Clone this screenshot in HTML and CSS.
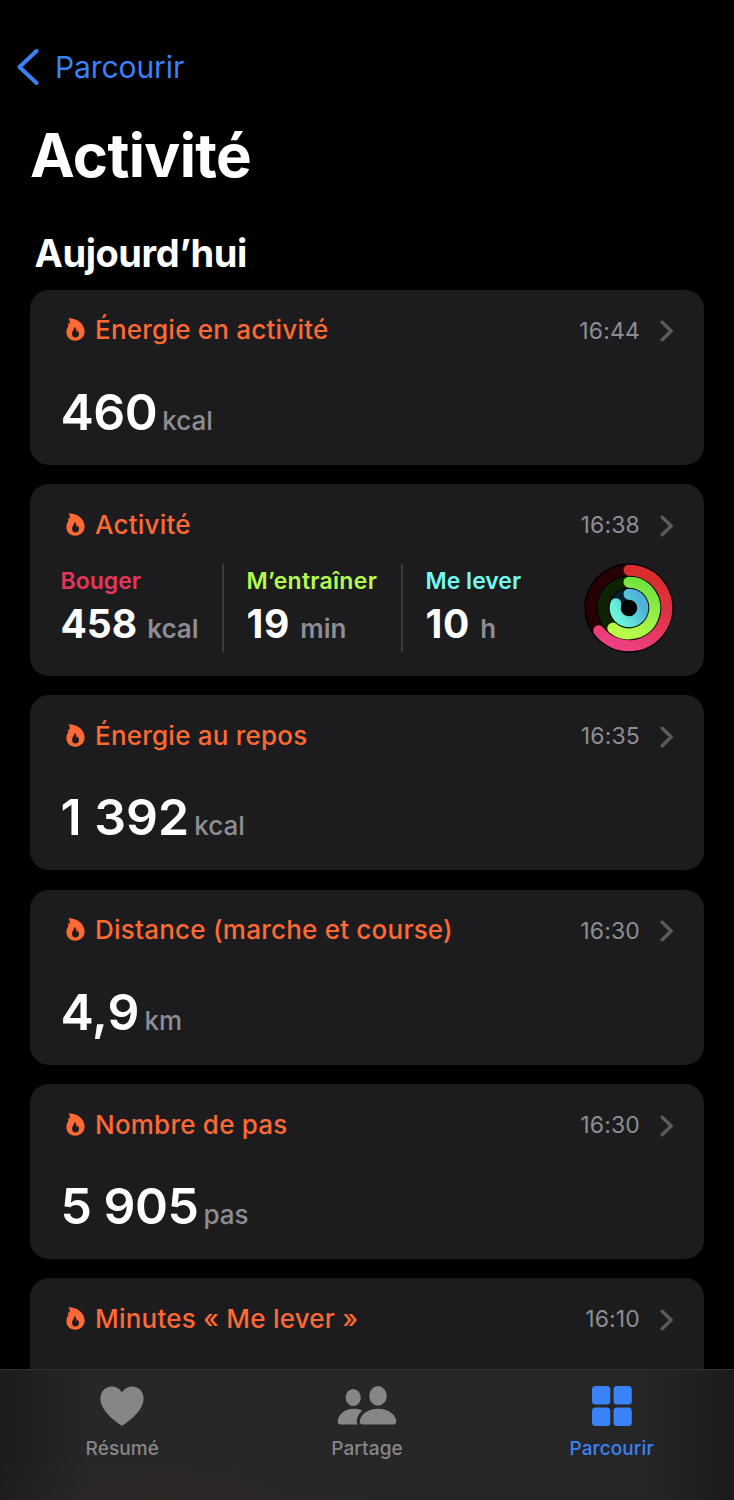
FILE: index.html
```html
<!DOCTYPE html>
<html lang="fr">
<head>
  <meta charset="UTF-8" />
  <meta name="viewport" content="width=device-width, initial-scale=1.0"/>
  <title>Activité</title>
  <link rel="stylesheet" href="styles.css">
</head>
<body>
  <!-- shared icons -->
  <svg class="sprite" width="0" height="0">
    <symbol id="flame" viewBox="0 0 19 23">
      <path fill-rule="evenodd" d="M2.4.3C10.8.2 18.6 5.6 18.6 13.6c0 5.3-4 9.1-9.3 9.1C4 22.7.4 19 .4 14.2c0-2.5.8-4.4 2-6L1.800 5.300l2 .5C4 3.800 3.600 1.900 2.400.3zM8.600 8.600c.3 2.400-2.500 4.400-2.500 7.300 0 2.200 1.500 3.600 3.500 3.600s3.400-1.400 3.400-3.500c0-1.600-.7-2.800-1.600-3.600-.1.800-.4 1.300-.9 1.600.1-1.900-.6-4.100-1.900-5.400z"/>
    </symbol>
    <symbol id="chevron" viewBox="0 0 14 22">
      <path d="M2.2 2.2L11.2 11l-9 8.8" fill="none" stroke="currentColor" stroke-width="3.4" stroke-linecap="round" stroke-linejoin="round"/>
    </symbol>
  </svg>

  <header class="nav">
    <a class="back" href="#">
      <svg class="back-icon" viewBox="0 0 22 36"><path d="M19.5 2L2.5 18l17 16" fill="none" stroke="currentColor" stroke-width="4" stroke-linecap="round" stroke-linejoin="round"/></svg>
      <span>Parcourir</span>
    </a>
    <h1>Activité</h1>
  </header>

  <main class="content">
    <h2>Aujourd’hui</h2>

    <div class="cards">
      <section class="card">
        <div class="card-header">
          <svg class="flame"><use href="#flame"/></svg>
          <h3>Énergie en activité</h3>
          <span class="time">16:44</span>
          <svg class="chevron"><use href="#chevron"/></svg>
        </div>
        <p class="value">460<span class="unit">kcal</span></p>
      </section>

      <section class="card card-rings">
        <div class="card-header">
          <svg class="flame"><use href="#flame"/></svg>
          <h3>Activité</h3>
          <span class="time">16:38</span>
          <svg class="chevron"><use href="#chevron"/></svg>
        </div>
        <div class="stats">
          <div class="stat move">
            <span class="label">Bouger</span>
            <p class="stat-value">458<span class="unit">kcal</span></p>
          </div>
          <div class="stat exercise">
            <span class="label">M’entraîner</span>
            <p class="stat-value">19<span class="unit">min</span></p>
          </div>
          <div class="stat stand">
            <span class="label">Me lever</span>
            <p class="stat-value">10<span class="unit">h</span></p>
          </div>
          <svg class="rings" viewBox="-45 -45 90 90">
            <defs>
              <linearGradient id="red" x1="0.6" y1="0" x2="0.3" y2="1">
                <stop offset="0" stop-color="#d92c2b"/>
                <stop offset="0.55" stop-color="#e23550"/>
                <stop offset="1" stop-color="#ee4084"/>
              </linearGradient>
              <linearGradient id="green" x1="0.6" y1="0" x2="0.3" y2="1">
                <stop offset="0" stop-color="#72e33f"/>
                <stop offset="1" stop-color="#b8fc4b"/>
              </linearGradient>
              <linearGradient id="blue" x1="0.8" y1="0.1" x2="0" y2="0.6">
                <stop offset="0" stop-color="#4fb2d9"/>
                <stop offset="1" stop-color="#69f3d8"/>
              </linearGradient>
            </defs>
            <circle r="44.7" fill="#000"/>
            <g fill="none" stroke-width="11" stroke-linecap="round">
              <circle r="37.8" stroke="#260003"/>
              <circle r="25.8" stroke="#0d2302"/>
              <circle r="13.8" stroke="#03202e"/>
              <path d="M0-37.8A37.8 37.8 0 1 1-30.2 22.7" stroke="url(#red)"/>
              <path d="M0-25.8A25.8 25.8 0 1 1-16.2 20.1" stroke="url(#green)"/>
              <path d="M0-13.8A13.8 13.8 0 1 1-13.1-4.3" stroke="url(#blue)"/>
            </g>
          </svg>
        </div>
      </section>

      <section class="card">
        <div class="card-header">
          <svg class="flame"><use href="#flame"/></svg>
          <h3>Énergie au repos</h3>
          <span class="time">16:35</span>
          <svg class="chevron"><use href="#chevron"/></svg>
        </div>
        <p class="value spaced">1 392<span class="unit">kcal</span></p>
      </section>

      <section class="card">
        <div class="card-header">
          <svg class="flame"><use href="#flame"/></svg>
          <h3>Distance (marche et course)</h3>
          <span class="time">16:30</span>
          <svg class="chevron"><use href="#chevron"/></svg>
        </div>
        <p class="value spaced">4,9<span class="unit">km</span></p>
      </section>

      <section class="card">
        <div class="card-header">
          <svg class="flame"><use href="#flame"/></svg>
          <h3>Nombre de pas</h3>
          <span class="time">16:30</span>
          <svg class="chevron"><use href="#chevron"/></svg>
        </div>
        <p class="value">5 905<span class="unit">pas</span></p>
      </section>

      <section class="card">
        <div class="card-header">
          <svg class="flame"><use href="#flame"/></svg>
          <h3>Minutes « Me lever »</h3>
          <span class="time">16:10</span>
          <svg class="chevron"><use href="#chevron"/></svg>
        </div>
      </section>
    </div>
  </main>

  <nav class="tabbar">
    <a class="tab" href="#">
      <svg class="tab-icon" viewBox="0 0 44 40"><path d="M22 39.8C18 37.6.4 25.6.4 12.6.4 5.5 5.2.4 11.6.4c4.7 0 8.4 2.5 10.4 6.1C24 2.9 27.7.4 32.4.4c6.4 0 11.2 5.1 11.2 12.2C43.6 25.6 26 37.6 22 39.8z" fill="currentColor"/></svg>
      <span>Résumé</span>
    </a>
    <a class="tab" href="#">
      <svg class="tab-icon people" viewBox="0 0 60 40">
        <g fill="currentColor">
          <ellipse cx="16.2" cy="11.5" rx="7.6" ry="8.6"/>
          <ellipse cx="41" cy="9.9" rx="8.8" ry="9.8"/>
          <path d="M25.2 24.4C22.6 23.3 19.8 22.8 16.6 22.8 6.6 22.8.8 29.8.8 35.8c0 1.8.9 2.7 2.6 2.7h17.2c-2.2-4.6.6-10.3 4.6-14.1z"/>
          <path d="M41 22.8c-12 0-18.3 7.7-18.3 12.8 0 2 1 2.9 2.8 2.9h31c1.8 0 2.8-.9 2.8-2.9 0-5.1-6.3-12.8-18.3-12.8z"/>
        </g>
      </svg>
      <span>Partage</span>
    </a>
    <a class="tab active" href="#">
      <svg class="tab-icon" viewBox="0 0 44 40">
        <g fill="currentColor">
          <rect x="2" y="0" width="18.3" height="18.4" rx="3.5"/>
          <rect x="23.5" y="0" width="18.3" height="18.4" rx="3.5"/>
          <rect x="2" y="21.5" width="18.3" height="18.4" rx="3.5"/>
          <rect x="23.5" y="21.5" width="18.3" height="18.4" rx="3.5"/>
        </g>
      </svg>
      <span>Parcourir</span>
    </a>
  </nav>
</body>
</html>
```

FILE: styles.css
```css
* {
  box-sizing: border-box;
}

body {
  margin: 0;
  height: 1500px;
  overflow: hidden;
  background: #000;
  color: #fff;
  font-family: Inter, "Noto Sans", sans-serif;
  display: flex;
  flex-direction: column;
}

h1, h2, h3, p {
  margin: 0;
}

a {
  color: inherit;
  text-decoration: none;
}

svg {
  display: block;
  flex-shrink: 0;
}

.sprite {
  position: absolute;
}

/* Top navigation */
.nav {
  padding-top: 47px;
}

.back {
  display: flex;
  align-items: center;
  gap: 16px;
  height: 40px;
  padding-left: 17px;
  color: #3a82f7;
  font-size: 30px;
  line-height: 40px;
  letter-spacing: -0.1px;
}

.back-icon {
  width: 22px;
  height: 36px;
}

h1 {
  margin-top: 32px;
  padding-left: 30px;
  font-size: 60px;
  font-weight: 700;
  line-height: 72px;
  letter-spacing: -0.65px;
}

.content {
  flex: 1;
  min-height: 0;
  overflow: hidden;
  padding: 38px 30.5px 0 30px;
}

h2 {
  padding-left: 4.5px;
  font-size: 38px;
  font-weight: 700;
  line-height: 48px;
  letter-spacing: -0.45px;
}

/* Cards */
.cards {
  display: flex;
  flex-direction: column;
  gap: 19.4px;
  margin-top: 12.9px;
}

.card {
  flex-shrink: 0;
  height: 175px;
  padding: 24.6px 30px 0 30.5px;
  border-radius: 19px;
  background: #1c1c1e;
}

.card-rings {
  height: 191.5px;
}

.card-header {
  display: flex;
  align-items: center;
  height: 31px;
  padding-left: 5.5px;
}

.flame {
  width: 19px;
  height: 23px;
  fill: #ff6934;
}

h3 {
  flex: 1;
  margin-left: 10px;
  color: #ff6934;
  font-size: 26px;
  font-weight: 500;
  line-height: 31px;
  letter-spacing: 0.22px;
}

.time {
  color: #8d8d93;
  font-size: 23px;
  line-height: 31px;
  letter-spacing: 0.15px;
  padding-top: 3px;
}

.chevron {
  width: 14px;
  height: 22px;
  margin: 3px 0 0 19.5px;
  color: #5b5b5f;
}

.value {
  margin-top: 36.5px;
  font-size: 50px;
  font-weight: 600;
  line-height: 60px;
  letter-spacing: -0.5px;
}

.spaced {
  letter-spacing: 0;
}

.unit {
  margin-left: 5px;
  color: #8d8d93;
  font-size: 26px;
  font-weight: 500;
  letter-spacing: 0;
}

/* Activity rings card */
.stats {
  display: flex;
  height: 88px;
  margin-top: 24.5px;
}

.stat {
  padding: 3px 0 0 23px;
  border-left: 2px solid #3b3b3d;
}

.move {
  width: 161px;
  padding-left: 0;
  border-left: none;
}

.exercise {
  width: 179px;
}

.stand {
  flex: 1;
}

.label {
  display: block;
  font-size: 23px;
  font-weight: 600;
  line-height: 28px;
}

.move .label {
  color: #e5355c;
}

.exercise .label {
  color: #b4fa4c;
  letter-spacing: 0.3px;
}

.stand .label {
  color: #73fbf1;
}

.stat-value {
  margin-top: 5px;
  font-size: 39px;
  font-weight: 700;
  line-height: 48px;
  letter-spacing: 0.8px;
}

.stat-value .unit {
  margin-left: 10px;
  font-weight: 600;
}

.move .stat-value {
  letter-spacing: 0;
}

.rings {
  width: 90px;
  height: 90px;
  margin-top: -1px;
}

/* Bottom tab bar */
.tabbar {
  display: flex;
  flex-shrink: 0;
  height: 131px;
  border-top: 1px solid #303031;
  background:
    radial-gradient(ellipse 220px 60px at 165px 135px, rgba(60, 40, 36, 0.3), transparent),
    linear-gradient(to right, #1c1c1c, #272727 90px, #262626 640px, #1b1b1b);
}

.tab {
  flex: 1;
  display: flex;
  flex-direction: column;
  align-items: center;
  padding-top: 15.5px;
  color: #868686;
  font-size: 19px;
  font-weight: 500;
  line-height: 24px;
  letter-spacing: 0.1px;
}

.tab-icon {
  width: 44px;
  height: 40px;
  margin-bottom: 11px;
}

.people {
  width: 60px;
}

.active {
  color: #3a82f7;
}
```
